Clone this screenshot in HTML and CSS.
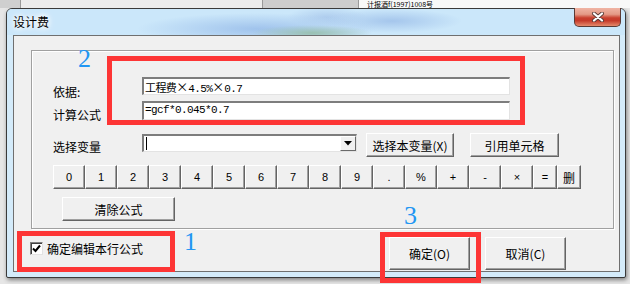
FILE: index.html
```html
<!DOCTYPE html>
<html>
<head>
<meta charset="UTF-8">
<title>设计费</title>
<link rel="stylesheet" href="styles.css">
</head>
<body>
<div class="sheet-top">
    <div class="cell cell-corner"></div>
    <div class="cell cell-a"></div>
    <div class="cell cell-b"></div>
    <div class="cell cell-c"><span>计报酒f(1997)1008号</span></div>
</div>

<div class="window">
    <div class="titlebar">
        <span class="title">设计费</span>
        <button class="close-btn" title="关闭">
            <svg width="14" height="10" viewBox="0 0 14 10">
                <path d="M3 1.5 L11 8.5 M11 1.5 L3 8.5" stroke="#5a3c38" stroke-width="4" stroke-linecap="round"/>
                <path d="M3 1.5 L11 8.5 M11 1.5 L3 8.5" stroke="#ffffff" stroke-width="2.2" stroke-linecap="round"/>
            </svg>
        </button>
    </div>

    <div class="client">
        <div class="group">
            <div class="row row-basis">
                <label class="field-label">依据:</label>
                <div class="textbox">工程费<span class="fw">×</span>4.5%<span class="fw">×</span>0.7</div>
            </div>
            <div class="row row-formula">
                <label class="field-label">计算公式</label>
                <div class="textbox">=gcf*0.045*0.7</div>
            </div>
            <div class="row row-var">
                <label class="field-label">选择变量</label>
                <div class="combo">
                    <span class="caret"></span>
                    <span class="combo-arrow">
                        <svg width="8" height="5" viewBox="0 0 8 5"><path d="M0 0 H8 L4 4.5 Z" fill="#000"/></svg>
                    </span>
                </div>
                <button class="btn btn-var">选择本变量(X)</button>
                <button class="btn btn-cell">引用单元格</button>
            </div>
            <div class="keypad">
                <button class="key">0</button>
                <button class="key">1</button>
                <button class="key">2</button>
                <button class="key">3</button>
                <button class="key">4</button>
                <button class="key">5</button>
                <button class="key">6</button>
                <button class="key">7</button>
                <button class="key">8</button>
                <button class="key">9</button>
                <button class="key">.</button>
                <button class="key">%</button>
                <button class="key">+</button>
                <button class="key">-</button>
                <button class="key">×</button>
                <button class="key key-sm">=</button>
                <button class="key key-sm key-cjk">删</button>
            </div>
            <button class="btn btn-clear">清除公式</button>
        </div>

        <div class="footer">
            <label class="check">
                <span class="check-box">
                    <svg width="9" height="9" viewBox="0 0 9 9"><path d="M1 4.5 L3.5 7 L8 1.5" stroke="#000" stroke-width="2" fill="none"/></svg>
                </span>
                确定编辑本行公式
            </label>
            <div class="actions">
                <button class="btn btn-ok">确定(O)</button>
                <button class="btn btn-cancel">取消(C)</button>
            </div>
        </div>
    </div>
</div>

<!-- annotation marks drawn over the dialog -->
<div class="mark mark-fields"></div>
<div class="mark mark-check"></div>
<div class="mark mark-ok"></div>
<span class="num num-2">2</span>
<span class="num num-1">1</span>
<span class="num num-3">3</span>
</body>
</html>
```

FILE: styles.css
```css
body {
    margin: 0;
    width: 630px;
    height: 284px;
    overflow: hidden;
    position: relative;
    background-color: #e6e6e6;
    font-family: "Noto Sans CJK SC", sans-serif;
    font-size: 12px;
    color: #000;
}
button {
    font-family: "Noto Sans CJK SC", sans-serif;
    font-size: 12px;
    color: #000;
    padding: 0;
    cursor: pointer;
}

/* spreadsheet peeking out behind the dialog */
.sheet-top {
    display: flex;
    height: 8px;
    overflow: hidden;
    background-color: #f4f4f4;
}
.cell {
    height: 8px;
    border-right: 1px solid #9a9a9a;
}
.cell-corner {
    width: 20px;
    background-color: #cfcfcf;
}
.cell-a {
    width: 241px;
    background-color: #ececec;
}
.cell-b {
    width: 95px;
    background-color: #cdcdcd;
}
.cell-c {
    flex: 1;
    background-color: #f8f8f8;
    border-right: none;
}
.cell-c span {
    display: block;
    margin-left: 8px;
    line-height: 8px;
    font-size: 7px;
}

/* dialog window */
.window {
    box-sizing: border-box;
    width: 620px;
    height: 270px;
    margin-left: 6px;
    border: 1px solid #3a3a3a;
    border-radius: 6px 6px 2px 2px;
    background-color: #d4ebfa;
    box-shadow: 1px 2px 4px rgba(0,0,0,0.45);
}
.titlebar {
    display: flex;
    height: 26px;
    padding-left: 6px;
    border-radius: 5px 5px 0 0;
    background:
        radial-gradient(ellipse 60px 8px at 305px 24px, rgba(150,190,170,0.9), rgba(150,190,170,0) 100%),
        radial-gradient(ellipse 120px 16px at 250px 20px, rgba(160,195,236,1), rgba(160,195,236,0) 100%),
        radial-gradient(ellipse 70px 12px at 385px 12px, rgba(165,198,236,1), rgba(165,198,236,0) 100%),
        radial-gradient(ellipse 40px 10px at 320px 8px, rgba(175,205,238,1), rgba(175,205,238,0) 100%),
        #cbe7fa;
}
.title {
    line-height: 26px;
    text-shadow: 0 0 4px #fff, 0 0 6px #fff, 0 0 8px #fff;
}
.close-btn {
    box-sizing: border-box;
    width: 47px;
    height: 19px;
    margin: -1px 4px 0 auto;
    border: 1px solid #5b3a35;
    border-top: none;
    border-radius: 0 0 5px 5px;
    background: linear-gradient(#f0b4a4 0%, #e49a86 35%, #c9402e 55%, #c53a2a 70%, #e58a6c 100%);
    display: flex;
    align-items: center;
    justify-content: center;
}

.client {
    box-sizing: border-box;
    height: 237px;
    margin: 0 5px 0 6px;
    border: 1px solid #6f6f6f;
    background-color: #f0f0f0;
}

/* group box */
.group {
    box-sizing: border-box;
    width: 583px;
    height: 179px;
    margin: 14px 0 0 17px;
    padding-left: 21px;
    border: 1px solid #a0a0a0;
    box-shadow: inset 1px 1px 0 #fff, 1px 1px 0 #fff;
}
.row {
    display: flex;
    align-items: flex-start;
}
.row-basis {
    height: 18px;
    margin-top: 26px;
}
.row-formula {
    height: 19px;
    margin-top: 6px;
}
.row-var {
    height: 24px;
    margin-top: 13px;
}
.field-label {
    width: 89px;
    margin-top: 7px;
    line-height: 14px;
}
.row-basis .field-label {
    margin-top: 8px;
}
.textbox {
    box-sizing: border-box;
    width: 368px;
    height: 100%;
    padding-left: 1px;
    background-color: #fff;
    border-top: 2px solid #7d7d7d;
    border-left: 2px solid #7d7d7d;
    border-right: 1px solid #e3e3e3;
    border-bottom: 1px solid #e3e3e3;
    font-family: "Liberation Mono", "Noto Sans CJK SC", monospace;
    font-size: 11px;
    letter-spacing: -0.6px;
    line-height: 15px;
    white-space: nowrap;
}
.textbox .fw {
    font-family: "Noto Sans CJK SC", sans-serif;
    font-size: 12px;
    letter-spacing: 0;
}
.combo {
    box-sizing: border-box;
    display: flex;
    align-items: center;
    width: 215px;
    height: 18px;
    margin-top: 1px;
    padding-left: 2px;
    background-color: #fff;
    border-top: 2px solid #7d7d7d;
    border-left: 2px solid #7d7d7d;
    border-right: 1px solid #e3e3e3;
    border-bottom: 1px solid #e3e3e3;
}
.caret {
    width: 1px;
    height: 13px;
    background-color: #000;
}
.combo-arrow {
    box-sizing: border-box;
    display: flex;
    align-items: center;
    justify-content: center;
    width: 16px;
    height: 15px;
    margin-left: auto;
    background-color: #f0f0f0;
    border-top: 1px solid #fff;
    border-left: 1px solid #fff;
    border-right: 1px solid #6a6a6a;
    border-bottom: 1px solid #6a6a6a;
}

.btn {
    box-sizing: border-box;
    height: 24px;
    background-color: #f0f0f0;
    border-top: 1px solid #fff;
    border-left: 1px solid #fff;
    border-right: 1px solid #646464;
    border-bottom: 1px solid #646464;
    box-shadow: inset -1px -1px 0 #a0a0a0;
}
.btn-var {
    width: 88px;
    margin-left: 9px;
}
.btn-cell {
    width: 89px;
    margin-left: 16px;
}

.keypad {
    display: flex;
    height: 24px;
    margin-top: 8px;
}
.key {
    box-sizing: border-box;
    width: 32px;
    height: 24px;
    background-color: #f0f0f0;
    border-top: 1px solid #fff;
    border-left: 1px solid #fff;
    border-right: 1px solid #646464;
    border-bottom: 1px solid #646464;
    box-shadow: inset -1px -1px 0 #a0a0a0;
    font-family: "Liberation Sans", sans-serif;
    font-size: 11px;
}
.key-sm {
    width: 24px;
}
.key-cjk {
    font-family: "Noto Sans CJK SC", sans-serif;
    font-size: 12px;
}
.btn-clear {
    display: block;
    width: 113px;
    margin: 8px 0 0 9px;
}

/* bottom part */
.footer {
    display: flex;
    height: 33px;
    margin-top: 8px;
    padding: 0 53px 0 16px;
}
.check {
    display: flex;
    align-items: center;
    align-self: flex-start;
    margin-top: 5px;
    line-height: 13px;
}
.check-box {
    box-sizing: border-box;
    display: flex;
    align-items: center;
    justify-content: center;
    width: 13px;
    height: 13px;
    margin-right: 4px;
    background-color: #fff;
    border-top: 1px solid #808080;
    border-left: 1px solid #808080;
    border-right: 1px solid #e3e3e3;
    border-bottom: 1px solid #e3e3e3;
    box-shadow: inset 1px 1px 0 #404040;
}
.actions {
    display: flex;
    gap: 15px;
    margin-left: auto;
}
.btn-ok,
.btn-cancel {
    width: 81px;
    height: 33px;
}

/* red boxes and blue numbers laid over the screenshot */
.mark {
    position: absolute;
    box-sizing: border-box;
    border: 5px solid #fd3535;
}
.mark-fields {
    left: 107px;
    top: 56px;
    width: 418px;
    height: 69px;
}
.mark-check {
    left: 17px;
    top: 231px;
    width: 158px;
    height: 41px;
}
.mark-ok {
    left: 380px;
    top: 232px;
    width: 101px;
    height: 51px;
}
.num {
    position: absolute;
    font-family: "Liberation Serif", serif;
    font-size: 26px;
    line-height: 26px;
    color: #2196f3;
}
.num-2 {
    left: 78px;
    top: 46px;
}
.num-1 {
    left: 184px;
    top: 229px;
}
.num-3 {
    left: 404px;
    top: 203px;
}
```
